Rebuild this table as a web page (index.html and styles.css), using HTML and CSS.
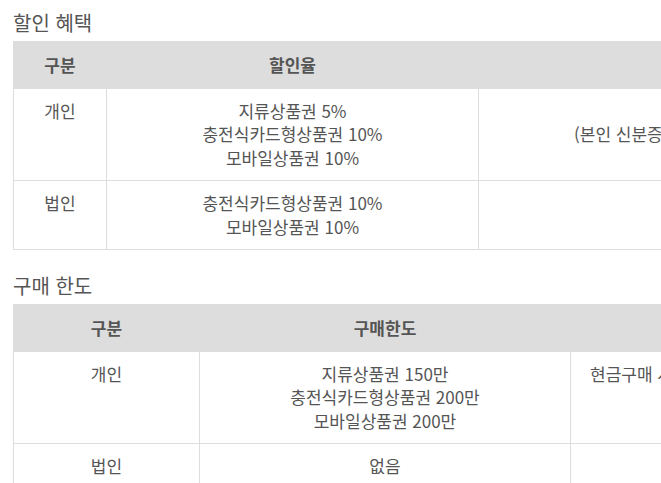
FILE: index.html
```html
<!DOCTYPE html>
<html lang="ko">
<head>
<meta charset="utf-8">
<link rel="stylesheet" href="styles.css">
</head>
<body>
<section class="block">
  <h2 class="title">할인 혜택</h2>
  <table class="tbl">
    <colgroup><col class="c1a"><col class="c2a"><col></colgroup>
    <thead>
      <tr><th>구분</th><th>할인율</th><th>비고</th></tr>
    </thead>
    <tbody>
      <tr>
        <td>개인</td>
        <td>지류상품권 5%<br>충전식카드형상품권 10%<br>모바일상품권 10%</td>
        <td class="mid">(본인 신분증 확인 후 구매 가능)</td>
      </tr>
      <tr>
        <td>법인</td>
        <td>충전식카드형상품권 10%<br>모바일상품권 10%</td>
        <td></td>
      </tr>
    </tbody>
  </table>
</section>
<section class="block second">
  <h2 class="title">구매 한도</h2>
  <table class="tbl">
    <colgroup><col class="c1b"><col class="c2b"><col></colgroup>
    <thead>
      <tr><th>구분</th><th>구매한도</th><th>비고</th></tr>
    </thead>
    <tbody>
      <tr>
        <td>개인</td>
        <td>지류상품권 150만<br>충전식카드형상품권 200만<br>모바일상품권 200만</td>
        <td class="note">현금구매 시 신분증 확인 후 구매 가능</td>
      </tr>
      <tr>
        <td>법인</td>
        <td>없음</td>
        <td></td>
      </tr>
    </tbody>
  </table>
</section>
</body>
</html>
```
FILE: styles.css
```css
html, body {
  margin: 0;
  padding: 0;
  background: #fff;
  overflow: hidden;
}
body {
  font-family: "Noto Sans CJK KR", "Noto Sans", sans-serif;
  color: #555;
}
.block {
  padding: 9px 0 0 13px;
  width: 880px;
}
.block.second {
  padding-top: 22px;
}
.title {
  margin: 0 0 4px 0;
  font-size: 20px;
  font-weight: 400;
  line-height: 28px;
  color: #555;
}
.tbl {
  width: 880px;
  table-layout: fixed;
  border-collapse: collapse;
  border: 1px solid #ddd;
  font-size: 17px;
  line-height: 23.5px;
}
.c1a { width: 93px; }
.c2a { width: 372px; }
.c1b { width: 186px; }
.c2b { width: 371px; }
.tbl th {
  background: #ddd;
  color: #555;
  font-weight: 700;
  padding: 11px 10px 11px;
  text-align: center;
  border: 1px solid #ddd;
}
.tbl td {
  padding: 10px 10px 11px;
  text-align: center;
  vertical-align: top;
  border: 1px solid #ddd;
  white-space: nowrap;
}
.tbl td.mid {
  vertical-align: middle;
}
.tbl td.note {
  text-align: left;
  padding-left: 19px;
}
```
